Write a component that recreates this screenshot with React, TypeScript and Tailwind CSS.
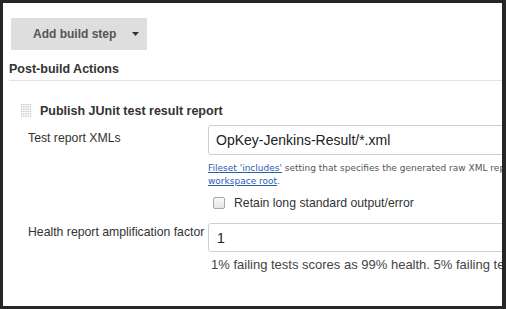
import React from "react";

// ─── Drag handle ────────────────────────────────────────────────────────────

function DragHandle() {
    const dots: React.ReactNode[] = [];
    for (let r = 0; r < 6; r++) {
        for (let c = 0; c < 5; c++) {
            dots.push(<rect key={`${r}-${c}`} x={c * 2.2} y={r * 2.3} width="1.3" height="1.3" fill="#c2c2c2" />);
        }
    }
    return (
        <svg width="11" height="14" viewBox="0 0 11 14" className="shrink-0">
            {dots}
        </svg>
    );
}

// ─── Page ───────────────────────────────────────────────────────────────────

export default function App() {
    return (
        <div className="h-[309px] w-[506px] bg-[#262626] pt-[3px] pb-[3px] pl-[3px] pr-[4px]">
            <div
                className="h-full w-full overflow-hidden bg-white text-[#333]"
                style={{ fontFamily: '"Liberation Sans", Arial, sans-serif' }}
            >
                {/* Add build step */}
                <div className="pl-[8px] pt-[15px]">
                    <button className="flex h-[32px] w-[136px] items-center bg-[#dedede] pl-[22px] text-[12px] font-bold text-[#555]">
                        <span>Add build step</span>
                        <svg width="7" height="4" viewBox="0 0 7 4" className="ml-[16px]">
                            <path d="M0 0 H7 L3.5 4 Z" fill="#333" />
                        </svg>
                    </button>
                </div>

                {/* Header */}
                <div className="ml-[6px] mt-[11px] border-b border-[#e3e3e3] pb-[2px] text-[12.5px] font-bold leading-[17px] text-[#333]">
                    Post-build Actions
                </div>

                {/* Publisher */}
                <div className="ml-[18px] mt-[22px] flex items-center gap-[8px]">
                    <DragHandle />
                    <span className="text-[12.5px] font-bold leading-[16px] text-[#333]">
                        Publish JUnit test result report
                    </span>
                </div>

                <div className="mt-[6px] grid grid-cols-[205px_1fr]">
                    <div className="whitespace-nowrap pl-[25px] pt-[5px] text-[12.25px] leading-[16px]">Test report XMLs</div>
                    <div>
                        <div className="flex h-[30px] w-[320px] items-center rounded-[3px] border border-[#cfcfcf] pl-[7px] text-[14px] text-[#222]">
                            OpKey-Jenkins-Result/*.xml
                        </div>
                        <div
                            className="mt-[7px] whitespace-nowrap text-[9px] leading-[13px] text-[#555]"
                            style={{ fontFamily: '"DejaVu Sans", Verdana, sans-serif' }}
                        >
                            <span className="text-[#2a5db0] underline">Fileset 'includes'</span> setting that specifies the generated raw XML report files
                            <br />
                            <span className="text-[#2a5db0] underline">workspace root</span>.
                        </div>
                        <div className="mt-[7px] flex items-center gap-[9px] pl-[5px]">
                            <span className="h-[12px] w-[12px] rounded-[2px] border border-[#a8a8a8] bg-gradient-to-b from-[#fafafa] to-[#e6e6e6]" />
                            <span className="text-[12.25px] leading-[16px]">Retain long standard output/error</span>
                        </div>
                    </div>
                </div>

                <div className="mt-[12px] grid grid-cols-[205px_1fr]">
                    <div className="whitespace-nowrap pl-[25px] pt-[1px] text-[12.25px] leading-[16px]">Health report amplification factor</div>
                    <div>
                        <div className="flex h-[29px] w-[320px] items-center rounded-[3px] border border-[#cfcfcf] pl-[8px] pt-[1px] text-[14px] text-[#222]">
                            1
                        </div>
                        <div className="mt-[5px] whitespace-nowrap pl-[3px] text-[13px] leading-[16px] text-[#444]">
                            1% failing tests scores as 99% health. 5% failing tests scores as 95% health
                        </div>
                    </div>
                </div>
            </div>
        </div>
    );
}
